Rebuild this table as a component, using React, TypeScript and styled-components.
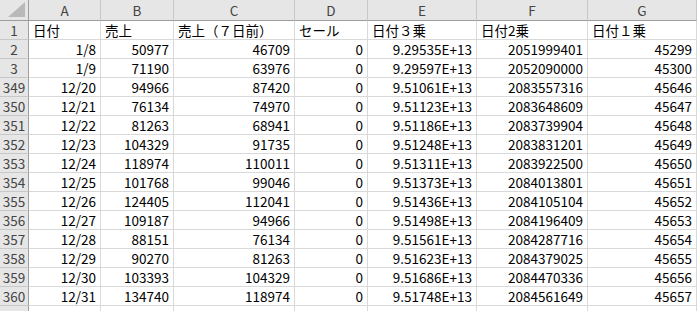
import React from "react";
import styled, { createGlobalStyle } from "styled-components";

const Global = createGlobalStyle`
  html, body { margin: 0; padding: 0; background: #ffffff; }
  body { overflow: hidden; }
`;

const COLS = [29, 72, 73, 121, 73, 109, 111, 109];
const LETTERS = ["A", "B", "C", "D", "E", "F", "G"];

type Row = { n: string; cells: string[]; text?: boolean };

const ROWS: Row[] = [
  { n: "1", cells: ["日付", "売上", "売上（７日前）", "セール", "日付３乗", "日付2乗", "日付１乗"], text: true },
  { n: "2", cells: ["1/8", "50977", "46709", "0", "9.29535E+13", "2051999401", "45299"] },
  { n: "3", cells: ["1/9", "71190", "63976", "0", "9.29597E+13", "2052090000", "45300"] },
  { n: "349", cells: ["12/20", "94966", "87420", "0", "9.51061E+13", "2083557316", "45646"] },
  { n: "350", cells: ["12/21", "76134", "74970", "0", "9.51123E+13", "2083648609", "45647"] },
  { n: "351", cells: ["12/22", "81263", "68941", "0", "9.51186E+13", "2083739904", "45648"] },
  { n: "352", cells: ["12/23", "104329", "91735", "0", "9.51248E+13", "2083831201", "45649"] },
  { n: "353", cells: ["12/24", "118974", "110011", "0", "9.51311E+13", "2083922500", "45650"] },
  { n: "354", cells: ["12/25", "101768", "99046", "0", "9.51373E+13", "2084013801", "45651"] },
  { n: "355", cells: ["12/26", "124405", "112041", "0", "9.51436E+13", "2084105104", "45652"] },
  { n: "356", cells: ["12/27", "109187", "94966", "0", "9.51498E+13", "2084196409", "45653"] },
  { n: "357", cells: ["12/28", "88151", "76134", "0", "9.51561E+13", "2084287716", "45654"] },
  { n: "358", cells: ["12/29", "90270", "81263", "0", "9.51623E+13", "2084379025", "45655"] },
  { n: "359", cells: ["12/30", "103393", "104329", "0", "9.51686E+13", "2084470336", "45656"] },
  { n: "360", cells: ["12/31", "134740", "118974", "0", "9.51748E+13", "2084561649", "45657"] },
  { n: "", cells: ["", "", "", "", "", "", ""] },
];

const Sheet = styled.div`
  display: grid;
  grid-template-columns: ${COLS.map((c) => `${c}px`).join(" ")};
  grid-auto-rows: 19px;
  grid-template-rows: 21px;
  width: 698px;
  height: 311px;
  overflow: hidden;
  font-family: "Noto Sans CJK JP", "Liberation Sans", sans-serif;
  font-size: 13.5px;
  color: #000;
`;

const Corner = styled.div`
  box-sizing: border-box;
  background: #e6e6e6;
  border-right: 1px solid #9e9e9e;
  border-bottom: 1px solid #9e9e9e;
  display: flex;
  align-items: flex-end;
  justify-content: flex-end;
  padding: 0 3px 3px 0;
`;

const ColHead = styled.div`
  box-sizing: border-box;
  background: #e6e6e6;
  border-right: 1px solid #c8c8c8;
  border-bottom: 1px solid #9e9e9e;
  color: #444;
  display: flex;
  align-items: center;
  justify-content: center;
  line-height: 20px;
`;

const RowHead = styled.div`
  box-sizing: border-box;
  background: #e6e6e6;
  border-right: 1px solid #9e9e9e;
  border-bottom: 1px solid #c8c8c8;
  color: #444;
  display: flex;
  align-items: center;
  justify-content: center;
  line-height: 18px;
`;

const Cell = styled.div<{ $align: "left" | "right" }>`
  box-sizing: border-box;
  border-right: 1px solid #d9d9d9;
  border-bottom: 1px solid #d9d9d9;
  display: flex;
  align-items: center;
  justify-content: ${(p) => (p.$align === "right" ? "flex-end" : "flex-start")};
  padding: 0 ${(p) => (p.$align === "right" ? "4px" : "0")} 0 ${(p) => (p.$align === "left" ? "4px" : "0")};
  white-space: nowrap;
  overflow: hidden;
  line-height: 18px;
`;

export default function App() {
  return (
    <>
      <Global />
      <Sheet>
        <Corner>
          <svg width="17" height="15" viewBox="0 0 17 15">
            <polygon points="17,0 17,15 0,15" fill="#b9b9b9" />
          </svg>
        </Corner>
        {LETTERS.map((l) => (
          <ColHead key={l}>{l}</ColHead>
        ))}
        {ROWS.map((r, idx) => (
          <React.Fragment key={idx}>
            <RowHead>{r.n}</RowHead>
            {r.cells.map((c, i) => (
              <Cell key={i} $align={r.text ? "left" : "right"}>
                {c}
              </Cell>
            ))}
          </React.Fragment>
        ))}
      </Sheet>
    </>
  );
}
